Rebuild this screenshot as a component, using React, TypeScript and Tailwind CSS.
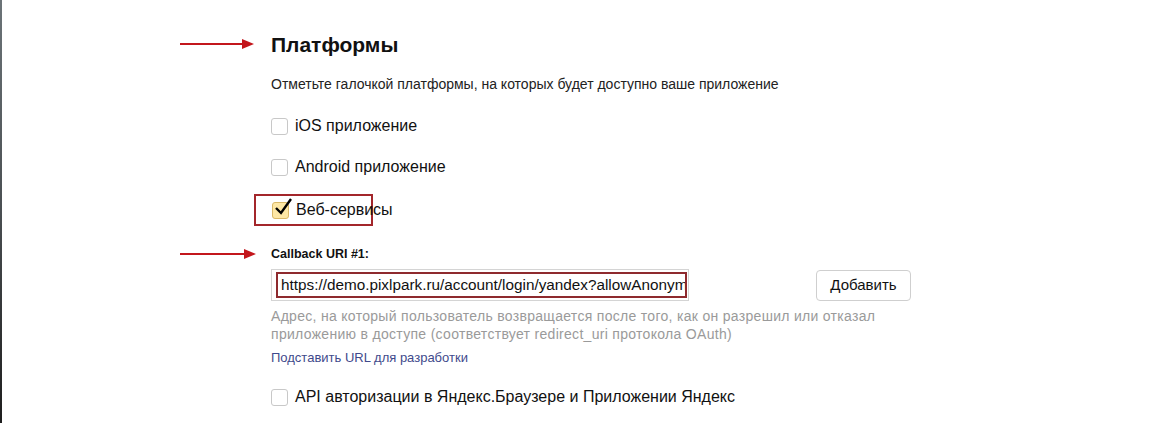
import type { ReactNode } from "react";

function Arrow({ width }: { width: number }) {
  return (
    <svg width={width} height="12" viewBox={`0 0 ${width} 12`} className="block">
      <line x1="0" y1="6" x2={width - 10} y2="6" stroke="#c3161c" strokeWidth="2" />
      <polygon points={`${width - 12},1 ${width},6 ${width - 12},11`} fill="#c3161c" />
    </svg>
  );
}

function Box({ checked }: { checked?: boolean }) {
  if (checked) {
    return (
      <span className="relative w-[17px] h-[17px] rounded-[3px] border border-[#d9b867] bg-[#fde7a5] shrink-0">
        <svg width="20" height="20" viewBox="0 0 20 20" className="absolute left-[1px] top-[-6px]">
          <path d="M2 11 L7 16 L17 2" fill="none" stroke="#000" strokeWidth="2.4" />
        </svg>
      </span>
    );
  }
  return <span className="w-[17px] h-[17px] rounded-[3px] border border-[#c8c8c8] bg-white shrink-0" />;
}

function Check({ label, checked }: { label: ReactNode; checked?: boolean }) {
  return (
    <div className="flex items-center gap-[7px] text-[16px] text-[#111] leading-[18px] whitespace-nowrap">
      <Box checked={checked} />
      <span>{label}</span>
    </div>
  );
}

export default function App() {
  return (
    <div className="w-[1176px] h-[423px] bg-white flex overflow-hidden font-['Liberation_Sans',Arial,sans-serif]">
      <div className="w-[2px] h-full bg-gradient-to-b from-[#6c7478] via-[#4a4f52] to-[#1e1e1e] shrink-0" />
      <div className="flex ml-[178px]">
        <div className="w-[91px] shrink-0 flex flex-col">
          <div className="mt-[38px]">
            <Arrow width={74} />
          </div>
          <div className="mt-[198px]">
            <Arrow width={76} />
          </div>
        </div>
        <div className="flex flex-col">
          <h1 className="mt-[32px] text-[21px] font-bold leading-[26px] text-[#111]">Платформы</h1>
          <p className="mt-[18px] text-[14px] leading-[16px] text-[#222]">
            Отметьте галочкой платформы, на которых будет доступно ваше приложение
          </p>
          <div className="mt-[25px]">
            <Check label="iOS приложение" />
          </div>
          <div className="mt-[23px]">
            <Check label="Android приложение" />
          </div>
          <div className="mt-[18px] -ml-[17px] w-[119px] h-[32px] border-2 border-[#a3262b] flex items-center pl-[16px]">
            <Check label="Веб-сервисы" checked />
          </div>
          <div className="mt-[20px] text-[12.5px] font-bold leading-[16px] text-[#111]">Callback URI #1:</div>
          <div className="mt-[7px] flex items-center">
            <div className="w-[418px] h-[32px] border border-[#d4d4d4] p-[2px] pl-[4px]">
              <div className="h-full w-[411px] border-2 border-[#8e2a2e] px-[3px] flex items-center overflow-hidden whitespace-nowrap text-[15.3px] text-[#111]">
                https://demo.pixlpark.ru/account/login/yandex?allowAnonym
              </div>
            </div>
            <button className="ml-[127px] h-[31px] w-[95px] rounded-[4px] border border-[#cfcfcf] bg-white text-[15px] text-[#111]">
              Добавить
            </button>
          </div>
          <p className="mt-[6px] text-[14px] tracking-[0.3px] leading-[18px] text-[#9a9a9a]">
            Адрес, на который пользователь возвращается после того, как он разрешил или отказал
            <br />
            приложению в доступе (соответствует redirect_uri протокола OAuth)
          </p>
          <a className="mt-[7px] text-[13px] leading-[16px] text-[#3f4a8c]">Подставить URL для разработки</a>
          <div className="mt-[22px]">
            <Check label="API авторизации в Яндекс.Браузере и Приложении Яндекс" />
          </div>
        </div>
      </div>
    </div>
  );
}
